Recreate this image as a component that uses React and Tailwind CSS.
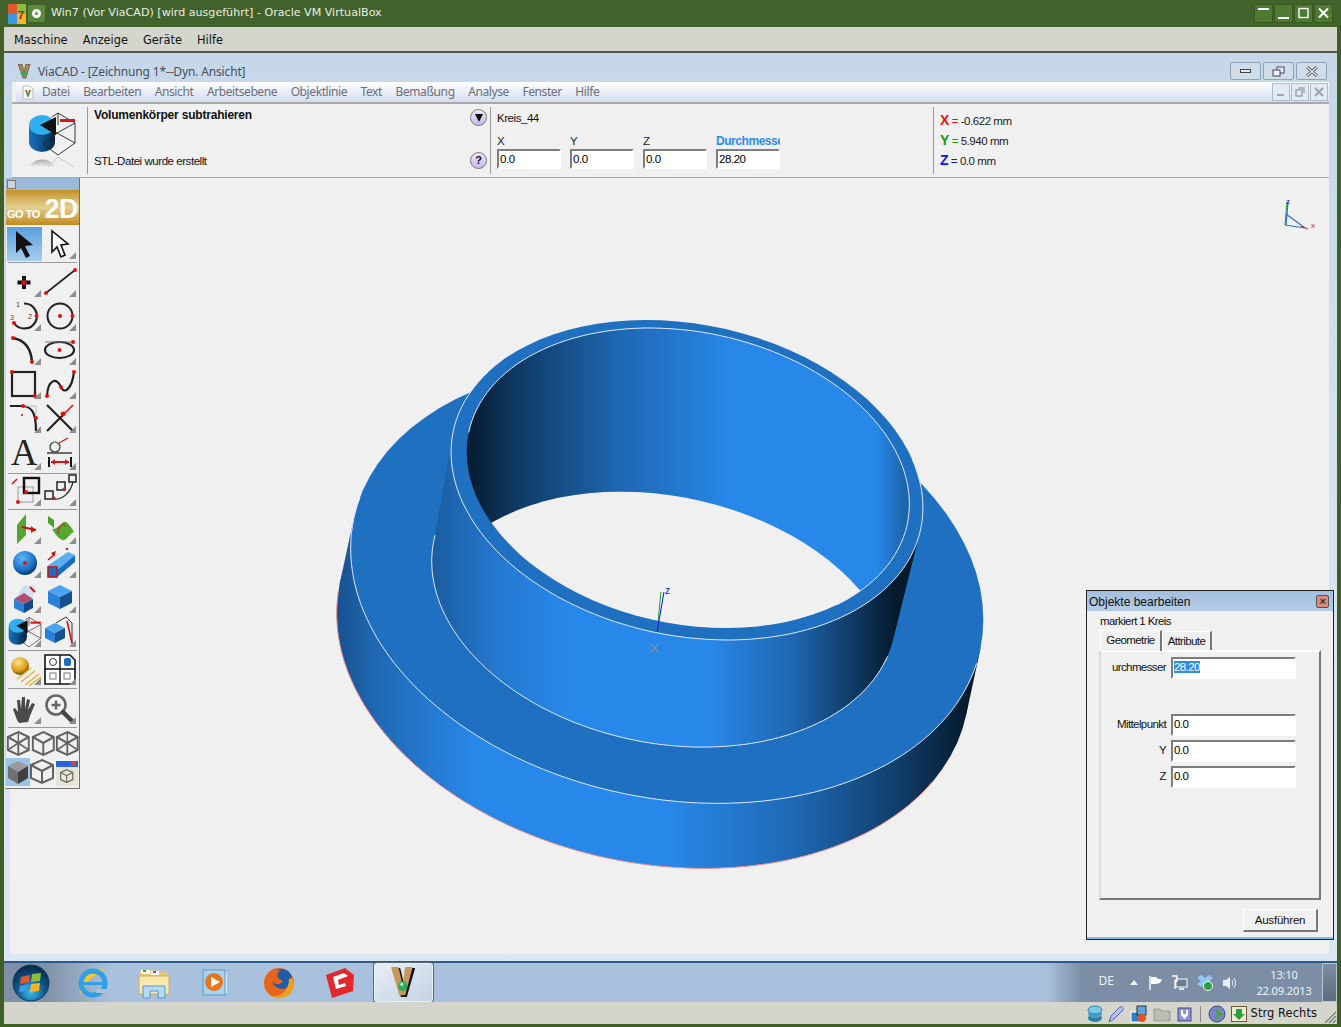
import React from "react";

const DEG = Math.PI / 180;
const TILT = 11.7 * DEG;

// point on a tilted ellipse, t in degrees (0 = right, 90 = bottom)
const pt = (e, t) => {
  const x = e.a * Math.cos(t * DEG);
  const y = e.b * Math.sin(t * DEG);
  return [e.x + x * Math.cos(TILT) - y * Math.sin(TILT), e.y + x * Math.sin(TILT) + y * Math.cos(TILT)];
};

const arc = (e, from, to) => {
  const out = [];
  const steps = 90;
  for (let i = 0; i <= steps; i++) {
    const p = pt(e, from + ((to - from) * i) / steps);
    out.push((i ? "L" : "M") + p[0].toFixed(1) + " " + p[1].toFixed(1));
  }
  return out.join(" ");
};

const full = (e) => arc(e, 0, 360) + " Z";

// quad joining the silhouette points of two ellipses
const sweep = (e, f) => {
  const dx = f.x - e.x;
  const dy = f.y - e.y;
  let lo = 0, hi = 0, loV = 1e9, hiV = -1e9;
  for (let t = 0; t < 360; t++) {
    const p = pt(e, t);
    const c = p[0] * dy - p[1] * dx;
    if (c < loV) { loV = c; lo = t; }
    if (c > hiV) { hiV = c; hi = t; }
  }
  const a = pt(e, lo), b = pt(e, hi), c = pt(f, hi), d = pt(f, lo);
  return `M${a[0]} ${a[1]} L${b[0]} ${b[1]} L${c[0]} ${c[1]} L${d[0]} ${d[1]} Z`;
};

const flangeTop = { x: 667, y: 584, a: 320, b: 214 };
const flangeBottom = { x: 653, y: 649, a: 320, b: 214 };
const tubeTop = { x: 687, y: 480, a: 238.8, b: 155.7 };
const tubeBottom = { x: 664, y: 588, a: 235, b: 155 };
const hole = { x: 688, y: 478, a: 224, b: 146 };
const holeLow = { x: 662, y: 648, a: 236, b: 152 };

function Part() {
  return (
    <svg className="block" width="1319" height="775" viewBox="10 178 1319 775">
      <defs>
        <linearGradient id="wallA" gradientUnits="userSpaceOnUse" x1="338" y1="0" x2="972" y2="0">
          <stop offset="0" stopColor="#175290" />
          <stop offset="0.06" stopColor="#2068b4" />
          <stop offset="0.22" stopColor="#2888ea" />
          <stop offset="0.52" stopColor="#2888ea" />
          <stop offset="0.72" stopColor="#1f68b4" />
          <stop offset="0.88" stopColor="#113f6c" />
          <stop offset="1" stopColor="#05182a" />
        </linearGradient>
        <linearGradient id="wallB" gradientUnits="userSpaceOnUse" x1="432" y1="0" x2="895" y2="0">
          <stop offset="0" stopColor="#1b5c9e" />
          <stop offset="0.14" stopColor="#2478d0" />
          <stop offset="0.3" stopColor="#2888ea" />
          <stop offset="0.6" stopColor="#2888ea" />
          <stop offset="0.78" stopColor="#1e66b0" />
          <stop offset="0.91" stopColor="#0f3a64" />
          <stop offset="1" stopColor="#051a2c" />
        </linearGradient>
        <linearGradient id="bore" gradientUnits="userSpaceOnUse" x1="464" y1="0" x2="912" y2="0">
          <stop offset="0" stopColor="#05192b" />
          <stop offset="0.12" stopColor="#0f3a65" />
          <stop offset="0.34" stopColor="#1e66b0" />
          <stop offset="0.6" stopColor="#2888ea" />
          <stop offset="0.92" stopColor="#2888ea" />
          <stop offset="1" stopColor="#1a5c9c" />
        </linearGradient>
        <clipPath id="boreClip">
          <path d={full(hole)} />
        </clipPath>
      </defs>

      {/* flange */}
      <path d={sweep(flangeTop, flangeBottom)} fill="url(#wallA)" />
      <path d={full(flangeBottom)} fill="url(#wallA)" />
      <path d={arc(flangeBottom, 178, 20)} fill="none" stroke="#f08a8a" strokeWidth="1" />
      <path d={full(flangeTop)} fill="#2070c2" />
      <path d={arc(flangeTop, 186, 4)} fill="none" stroke="#dfeaf6" strokeWidth="1" />

      {/* tube */}
      <path d={sweep(tubeTop, tubeBottom)} fill="url(#wallB)" />
      <path d={full(tubeBottom)} fill="url(#wallB)" />
      <path d={arc(tubeBottom, 182, 8)} fill="none" stroke="#dfeaf6" strokeWidth="1" />
      <path d={full(tubeTop)} fill="#2070c2" />
      <path d={arc(tubeTop, 205, -25)} fill="none" stroke="#dfeaf6" strokeWidth="1" />

      {/* bore */}
      <path d={full(hole)} fill="url(#bore)" />
      <path d={full(holeLow)} fill="#f0f0f0" clipPath="url(#boreClip)" />
      <path d={arc(hole, 180, 400)} fill="none" stroke="#dfeaf6" strokeWidth="1" />

      {/* origin triad */}
      <path d="M657 632 L661 592" stroke="#22a030" strokeWidth="1" />
      <path d="M657 632 L664 592" stroke="#1010f0" strokeWidth="1" />
      <text x="665" y="594" fontSize="10" fill="#1010f0" fontFamily="Liberation Sans, sans-serif">z</text>
      <path d="M651 644 L658 652 M658 644 L651 652" stroke="#d9924a" strokeWidth="0.8" />
    </svg>
  );
}

const Corner = () => <span className="absolute right-[1px] bottom-[2px] w-0 h-0 border-l-[7px] border-l-transparent border-b-[7px] border-b-[#8e8e8e]" />;

function Cell({ children, tri = true, active, w = 35, h = 34 }) {
  return (
    <div className={"relative shrink-0 " + (active ? "bg-gradient-to-b from-[#5a9fe0] to-[#a5cdea]" : "")} style={{ width: w, height: h }}>
      <svg width={w} height={h} viewBox={`0 0 ${w} ${h}`} className="block overflow-visible">{children}</svg>
      {tri && <Corner />}
    </div>
  );
}

const Dot = ({ x, y, r = 2 }) => <circle cx={x} cy={y} r={r} fill="#e01010" />;

function Row({ h = 34, children }) {
  return <div className="flex pl-px" style={{ height: h }}>{children}</div>;
}

const Sep = () => <div className="h-px bg-[#9a9a9a] mx-[2px] my-[1px]" />;

function Cube({ x = 18, y = 15, s = 11, top = "#4aa4f0", left = "#2a7fd6", right = "#15508f" }) {
  return (
    <g>
      <path d={`M${x} ${y - s} L${x + s} ${y - s / 2} L${x} ${y} L${x - s} ${y - s / 2} Z`} fill={top} />
      <path d={`M${x - s} ${y - s / 2} L${x} ${y} L${x} ${y + s} L${x - s} ${y + s / 2} Z`} fill={left} />
      <path d={`M${x + s} ${y - s / 2} L${x} ${y} L${x} ${y + s} L${x + s} ${y + s / 2} Z`} fill={right} />
    </g>
  );
}

function Wire({ cross }) {
  return (
    <g fill="none" stroke="#636363" strokeWidth="2">
      <path d="M14 3 L25 8 L25 21 L14 26 L3 21 L3 8 Z" />
      <path d="M3 8 L14 14 L25 8 M14 14 L14 26" />
      {cross && <path d="M14 3 L14 14 M3 21 L14 14 L25 21" strokeWidth="1.5" />}
    </g>
  );
}

// cylinder with a wedge cut out, next to a wire cube
function SubtractIcon({ scale = 1, id = "cyl" }) {
  return (
    <g transform={`scale(${scale})`}>
      <defs>
        <linearGradient id={id} x1="0" y1="0" x2="1" y2="0">
          <stop offset="0" stopColor="#1a70b8" />
          <stop offset="0.45" stopColor="#0f5590" />
          <stop offset="1" stopColor="#06223e" />
        </linearGradient>
      </defs>
      <ellipse cx="14" cy="31" rx="13" ry="10" fill={`url(#${id})`} />
      <rect x="1" y="14" width="26" height="17" fill={`url(#${id})`} />
      <ellipse cx="14" cy="14" rx="13" ry="10" fill="#2fb0ee" />
      <path d="M12 14 L28 6 L28 24 Z" fill="#111" />
      <g fill="none" stroke="#222" strokeWidth="0.9">
        <path d="M30 2 L47 12 L47 32 L30 44 L15 33" />
        <path d="M24 6 L30 2 M29 22 L47 12 M29 22 L47 32 M29 22 L15 33 M29 22 L22 27 M29 22 L22 17 M30 2 L30 14" />
      </g>
      <rect x="32" y="8" width="15" height="3" fill="#d81818" />
    </g>
  );
}

function Palette() {
  return (
    <div className="absolute left-[5px] top-[178px] w-[75px] h-[611px] bg-[#f0f0f0] border-r border-b border-[#6f6f6f] border-l border-l-[#cfcfcf]">
      <div className="h-[12px] bg-[#9ab8d8] flex items-center pl-[1px]">
        <span className="block shrink-0 w-[9px] h-[9px] bg-[#d2d2d2] border border-[#777]" />
      </div>
      <div className="h-[35px] bg-gradient-to-b from-[#c4921f] via-[#e5cf8e] to-[#c08a14] flex items-end justify-between pr-[1px] overflow-hidden whitespace-nowrap [font-family:'Liberation_Sans',sans-serif]">
        <span className="shrink-0 text-white font-bold text-[11px] leading-[11px] tracking-[-0.5px] ml-[1px] mb-[5px]">GO TO</span>
        <span className="shrink-0 text-white font-bold text-[27px] leading-[26px] tracking-[-0.5px] mb-[3px]">2D</span>
      </div>
      <div className="h-[2px]" />

      <Row>
        <Cell tri={false} active>
          <path d="M9 4 L9 26 L14 21 L19 31 L23 29 L18 19 L26 18 Z" fill="#111" />
        </Cell>
        <Cell>
          <path d="M10 4 L10 25 L15 20 L19 30 L23 28 L19 18 L26 17 Z" fill="#fff" stroke="#111" strokeWidth="1.6" />
        </Cell>
      </Row>
      <Sep />
      <div className="h-[1px]" />

      <Row>
        <Cell>
          <path d="M17 11 L17 24 M10.5 17.5 L23.5 17.5" stroke="#111" strokeWidth="4" />
          <Dot x={17} y={17.5} r={2.5} />
        </Cell>
        <Cell>
          <path d="M4 28 L33 5" stroke="#222" strokeWidth="1.6" />
          <Dot x={4} y={28} /><Dot x={33} y={5} />
        </Cell>
      </Row>
      <Row>
        <Cell>
          <path d="M17 4.5 A12.5 12.5 0 1 1 7 24" fill="none" stroke="#222" strokeWidth="2.2" />
          <Dot x={29.5} y={17} /><Dot x={7} y={24} />
          <text x="9" y="8" fontSize="7" fill="#444" fontFamily="Liberation Sans, sans-serif">1</text>
          <text x="21" y="20" fontSize="7" fill="#444" fontFamily="Liberation Sans, sans-serif">2</text>
          <text x="3" y="21" fontSize="7" fill="#444" fontFamily="Liberation Sans, sans-serif">3</text>
        </Cell>
        <Cell>
          <circle cx="18" cy="17" r="12.5" fill="none" stroke="#222" strokeWidth="2" />
          <Dot x={18} y={17} /><Dot x={30.5} y={17} />
        </Cell>
      </Row>
      <Row>
        <Cell>
          <path d="M6 5 C17 7 24 15 25 29" fill="none" stroke="#222" strokeWidth="2.4" />
          <Dot x={6} y={5} /><Dot x={25} y={29} />
        </Cell>
        <Cell>
          <ellipse cx="17.5" cy="17" rx="14.5" ry="8" fill="none" stroke="#222" strokeWidth="2.2" />
          <path d="M3 9 L31 9" fill="none" stroke="#777" strokeWidth="1" />
          <Dot x={17.5} y={17} /><Dot x={31} y={9} />
        </Cell>
      </Row>
      <Row>
        <Cell>
          <rect x="5" y="5" width="23" height="24" fill="none" stroke="#222" strokeWidth="2.2" />
          <Dot x={5} y={5} /><Dot x={28} y={29} />
        </Cell>
        <Cell>
          <path d="M5 29 C6 12 15 10 19 20 C22 28 30 22 32 5" fill="none" stroke="#222" strokeWidth="2.2" />
          <Dot x={5} y={29} /><Dot x={19} y={20} /><Dot x={32} y={5} />
        </Cell>
      </Row>
      <Row>
        <Cell>
          <path d="M3 5 L16 5 C24 6 29 10 29 30" fill="none" stroke="#222" strokeWidth="2.2" />
          <path d="M16 5 L29 5 L29 17" fill="none" stroke="#bbb" strokeWidth="1" />
          <Dot x={16} y={5} /><Dot x={29} y={17} /><Dot x={15} y={14} r={1} />
        </Cell>
        <Cell>
          <path d="M5 4 L31 30 M5 30 L22 13" stroke="#222" strokeWidth="2.2" />
          <path d="M20 15 L31 4" stroke="#e01010" strokeWidth="1.6" />
          <Dot x={21} y={13} r={2.4} />
        </Cell>
      </Row>
      <Row h={37}>
        <Cell h={37}>
          <text x="17" y="30" textAnchor="middle" fontSize="37" fill="#222" fontFamily="Liberation Serif, serif">A</text>
        </Cell>
        <Cell h={37}>
          <circle cx="13" cy="12" r="5" fill="none" stroke="#333" strokeWidth="1.2" />
          <path d="M17 8 L26 3" stroke="#e01010" strokeWidth="1.2" />
          <path d="M5 18 L30 18" stroke="#333" strokeWidth="1.4" />
          <path d="M7 22 L7 32 M29 22 L29 32" stroke="#111" strokeWidth="2" />
          <path d="M9 27 L27 27" stroke="#e01010" strokeWidth="2" />
          <path d="M9 27 L13 24 L13 30 Z M27 27 L23 24 L23 30 Z" fill="#e01010" />
        </Cell>
      </Row>
      <div className="h-px bg-[#9a9a9a] mx-[2px] mt-[1px]" />
      <Row>
        <Cell>
          <rect x="11" y="13" width="15" height="15" fill="none" stroke="#999" strokeWidth="1" />
          <rect x="17" y="4" width="15" height="15" fill="none" stroke="#111" strokeWidth="2.4" />
          <path d="M5 10 L10 5" stroke="#e01010" strokeWidth="1.6" />
          <Dot x={11} y={28} /><Dot x={19} y={18} />
        </Cell>
        <Cell>
          <rect x="3" y="17" width="8" height="8" fill="none" stroke="#222" strokeWidth="1.5" />
          <rect x="15" y="8" width="8" height="8" fill="none" stroke="#222" strokeWidth="1.5" />
          <rect x="27" y="1" width="7" height="7" fill="none" stroke="#222" strokeWidth="1.5" />
          <path d="M11 25 C20 26 28 20 31 8" fill="none" stroke="#222" strokeWidth="1.2" />
          <Dot x={12} y={24} r={1.5} /><Dot x={22} y={15} r={1.5} />
        </Cell>
      </Row>
      <div className="h-px bg-[#9a9a9a] mx-[2px] mt-[1px] mb-[2px]" />

      <Row>
        <Cell>
          <path d="M10 13 L19 2 L19 23 L10 32 Z" fill="#53a630" />
          <path d="M15 15 L29 18" stroke="#d01010" strokeWidth="2" />
          <path d="M29 18 L24 14 L24 21 Z" fill="#d01010" />
        </Cell>
        <Cell>
          <path d="M6 4 L12 8 L12 16 L6 11 Z" fill="#4f9f2c" />
          <path d="M10 17 C16 18 20 8 24 10 C27 12 30 16 32 20 C27 22 24 30 20 28 C16 26 13 22 10 17 Z" fill="#55a832" />
          <path d="M16 22 C16 14 22 10 24 15" fill="none" stroke="#c81818" strokeWidth="1" />
        </Cell>
      </Row>
      <Row>
        <Cell>
          <defs>
            <radialGradient id="ball" cx="40%" cy="30%" r="70%">
              <stop offset="0" stopColor="#5fb8f5" />
              <stop offset="0.7" stopColor="#1a70c4" />
              <stop offset="1" stopColor="#073a70" />
            </radialGradient>
            <radialGradient id="gold" cx="40%" cy="30%" r="70%">
              <stop offset="0" stopColor="#fde48a" />
              <stop offset="0.7" stopColor="#d89a16" />
              <stop offset="1" stopColor="#6a4c08" />
            </radialGradient>
          </defs>
          <circle cx="18" cy="17" r="12" fill="url(#ball)" />
          <Dot x={18} y={17} />
        </Cell>
        <Cell>
          <path d="M5 20 L26 6 L33 9 L14 25 Z" fill="#5ab0ee" />
          <path d="M14 25 L33 9 L33 16 L14 32 Z" fill="#1a6ec0" />
          <rect x="6" y="21" width="9" height="10" fill="#1a6ec0" stroke="#c01818" strokeWidth="1.6" />
          <path d="M6 14 L13 8" stroke="#d01010" strokeWidth="1.6" />
          <path d="M14 5 L9 7 L12 11 Z" fill="#d01010" />
          <Dot x={25} y={3} r={1.2} />
        </Cell>
      </Row>
      <Row h={35}>
        <Cell h={35}>
          <path d="M7 20 L17 5 L28 6 L25 20 L17 30 Z" fill="#cfe0ee" />
          <path d="M7 19 L17 13 L26 19 L17 24 Z" fill="#b05070" />
          <path d="M7 19 L17 24 L17 33 L7 28 Z" fill="#2a7fd6" />
          <path d="M26 19 L17 24 L17 33 L26 28 Z" fill="#124a85" />
          <path d="M23 7 L28 12" stroke="#c01818" strokeWidth="1.8" />
        </Cell>
        <Cell h={35}>
          <Cube x={18} y={17} s={12} />
        </Cell>
      </Row>
      <Row>
        <Cell>
          <g transform="translate(1 1)"><SubtractIcon scale={0.7} id="cylSmall" /></g>
        </Cell>
        <Cell>
          <Cube x={13} y={18} s={10} />
          <path d="M14 8 L24 2 L30 8 L30 30" fill="none" stroke="#333" strokeWidth="1" />
          <path d="M25 6 L30 28" stroke="#d01010" strokeWidth="1.6" />
        </Cell>
      </Row>
      <div className="h-px bg-[#9a9a9a] mx-[2px] my-[1px]" />
      <div className="h-[1px]" />

      <Row>
        <Cell>
          <circle cx="13" cy="13" r="9" fill="url(#gold)" />
          <path d="M10 26 L24 15 M14 29 L28 18 M18 32 L32 21 M22 33 L34 24" stroke="#e0b030" strokeWidth="1.3" />
        </Cell>
        <Cell>
          <path d="M3 2 L28 2 L33 7 L33 31 L3 31 Z" fill="#fff" stroke="#111" strokeWidth="1.6" />
          <path d="M3 16 L33 16 M18 2 L18 31" stroke="#111" strokeWidth="1.4" />
          <circle cx="11" cy="9" r="3.5" fill="none" stroke="#333" />
          <rect x="22" y="5" width="7" height="8" rx="2" fill="#1a6ec0" />
          <rect x="8" y="20" width="6" height="6" fill="none" stroke="#777" />
          <rect x="22" y="20" width="6" height="6" fill="none" stroke="#777" />
        </Cell>
      </Row>
      <div className="h-px bg-[#9a9a9a] mx-[2px] my-[1px]" />
      <div className="h-[2px]" />

      <Row>
        <Cell>
          <path d="M10 28 L6 17 L8 16 L11 20 L10 8 L13 8 L14 17 L15 5 L18 5 L18 17 L20 7 L23 8 L21 18 L25 11 L28 12 L23 24 L21 30 L12 31 Z" fill="#4a4a4a" />
        </Cell>
        <Cell>
          <circle cx="14" cy="13" r="9.5" fill="#f4f4f4" stroke="#666" strokeWidth="2.6" />
          <path d="M14 8.5 L14 17.5 M9.5 13 L18.5 13" stroke="#666" strokeWidth="2.4" />
          <path d="M21 20 L30 29" stroke="#444" strokeWidth="4.5" strokeLinecap="round" />
        </Cell>
      </Row>
      <div className="h-px bg-[#9a9a9a] mx-[2px] my-[1px]" />
      <div className="h-[1px]" />

      <div className="flex pl-[1px] h-[28px]">
        <Cell tri={false} w={25} h={28}><g transform="translate(-2 -1) scale(0.95 1)"><Wire cross /></g></Cell>
        <Cell tri={false} w={24} h={28}><g transform="translate(-2 -1) scale(0.95 1)"><Wire /></g></Cell>
        <Cell tri={false} w={22} h={28}><g transform="translate(-2 -1) scale(0.95 1)"><Wire cross /></g></Cell>
      </div>
      <div className="flex h-[28px]">
        <div className="w-[24px] h-[28px] bg-[#9cc4e6]">
          <svg width="24" height="28" viewBox="0 0 24 28" className="block">
            <path d="M12 3 L22 8 L12 14 L2 8 Z" fill="#9a9a9a" />
            <path d="M2 8 L12 14 L12 26 L2 20 Z" fill="#707070" />
            <path d="M22 8 L12 14 L12 26 L22 20 Z" fill="#3f3f3f" />
          </svg>
        </div>
        <Cell tri={false} w={25} h={28}><g transform="translate(-2 -1)"><Wire /></g></Cell>
        <Cell tri={false} w={24} h={28}>
          <rect x="1" y="3" width="22" height="25" fill="#e8e6d2" />
          <rect x="1" y="3" width="22" height="6" fill="#2a62e0" />
          <rect x="16" y="4" width="5" height="4" fill="#e04030" />
          <g transform="translate(4 10) scale(0.55)"><Wire /></g>
        </Cell>
      </div>
    </div>
  );
}

const inputCls = "h-[20px] bg-white border-2 border-t-[#7d7d7d] border-l-[#7d7d7d] border-r-white border-b-white text-black leading-[16px] pl-[1px]";

function Field({ label, value, blue }) {
  return (
    <div className="w-[73px] shrink-0">
      <div className={"h-[15px] leading-[15px] overflow-hidden w-[64px] whitespace-nowrap " + (blue ? "text-[#2a8cf0] font-bold text-[12px]" : "text-[#222]")}>{label}</div>
      <div className={inputCls + " w-[64px]"}>{value}</div>
    </div>
  );
}

function Coord({ name, color, value }) {
  return (
    <div className="h-[20px] leading-[20px] whitespace-nowrap">
      <span className={"text-[14px] font-bold " + color}>{name}</span>
      <span className="text-[#222]"> <span className={color}>=</span> {value}</span>
    </div>
  );
}

function RoundBtn({ children }) {
  return (
    <div className="w-[17px] h-[17px] rounded-full border border-[#777] bg-gradient-to-b from-[#efe6fb] to-[#cbb8ee] flex items-center justify-center text-[11px] font-bold text-[#111] leading-none">
      {children}
    </div>
  );
}

function OptionBar() {
  return (
    <div className="h-[76px] bg-[#f0f0f0] border-t-2 border-b border-t-[#a9a9a9] border-b-[#a9a9a9] flex text-[11.5px] tracking-[-0.45px] [font-family:'Liberation_Sans',sans-serif] text-[#111]">
      <div className="w-[75px] shrink-0 pt-[7px] pl-[16px]">
        <svg width="52" height="62" viewBox="0 0 52 62" className="block">
          <SubtractIcon />
          <defs>
            <linearGradient id="shadowFade" x1="0" y1="0" x2="0" y2="1">
              <stop offset="0" stopColor="#a8abae" />
              <stop offset="1" stopColor="#f0f0f0" />
            </linearGradient>
          </defs>
          <path d="M1 56 C6 46 22 46 27 56 Z" fill="url(#shadowFade)" />
          <path d="M30 46 L46 56 M30 46 L20 56" stroke="#c8c8c8" />
        </svg>
      </div>
      <div className="w-px bg-[#9a9a9a] my-[3px]" />
      <div className="w-[375px] shrink-0 pl-[6px] flex flex-col justify-between pt-[2px] pb-[7px]">
        <div className="font-bold text-[12px] tracking-[-0.2px]">Volumenkörper subtrahieren</div>
        <div>STL-Datei wurde erstellt</div>
      </div>
      <div className="w-[27px] shrink-0 flex flex-col justify-between pt-[5px] pb-[8px] pl-[7px]">
        <RoundBtn>
          <span className="block w-0 h-0 mt-[1px] border-l-[4px] border-r-[4px] border-t-[8px] border-l-transparent border-r-transparent border-t-[#111]" />
        </RoundBtn>
        <RoundBtn>?</RoundBtn>
      </div>
      <div className="w-px bg-[#9a9a9a] my-[3px]" />
      <div className="w-[442px] shrink-0 pl-[6px] pt-[7px]">
        <div className="h-[23px] leading-[15px]">Kreis_44</div>
        <div className="flex">
          <Field label="X" value="0.0" />
          <Field label="Y" value="0.0" />
          <Field label="Z" value="0.0" />
          <Field label="Durchmesser" value="28.20" blue />
        </div>
      </div>
      <div className="w-px bg-[#9a9a9a] my-[3px]" />
      <div className="pl-[6px] pt-[6px]">
        <Coord name="X" color="text-[#ee1010]" value="-0.622 mm" />
        <Coord name="Y" color="text-[#0c9c0c]" value="5.940 mm" />
        <Coord name="Z" color="text-[#1010ee]" value="0.0 mm" />
      </div>
    </div>
  );
}

function Triad() {
  return (
    <svg className="absolute left-[1275px] top-[192px]" width="46" height="40" viewBox="0 0 46 40">
      <path d="M10 33 L12 10" stroke="#1c9c30" />
      <path d="M11 33 L13 10" stroke="#2a70c8" strokeWidth="1.2" />
      <path d="M10 33 L30 36 L11 22" fill="none" stroke="#2a70c8" strokeWidth="1.2" />
      <path d="M26 34 L33 37" stroke="#e01818" />
      <text x="36" y="36" fontSize="8" fill="#e01818" fontFamily="Liberation Sans, sans-serif">x</text>
      <text x="11" y="12" fontSize="8" fill="#1010ee" fontFamily="Liberation Sans, sans-serif">z</text>
    </svg>
  );
}

function EditDialog() {
  return (
    <div className="absolute left-[1086px] top-[590px] w-[248px] h-[350px] border border-[#222] bg-[#f0f0f0] text-[11.5px] tracking-[-0.6px] text-[#111] [font-family:'Liberation_Sans',sans-serif] flex flex-col">
      <div className="h-[20px] bg-gradient-to-b from-[#a3bfdc] to-[#b3cbe6] flex items-center justify-between pl-[2px] pr-[4px] shrink-0">
        <span className="text-[12px] tracking-[0px] pt-[1px]">Objekte bearbeiten</span>
        <span className="w-[13px] h-[13px] rounded-[2px] border border-[#555] bg-[#d98a7c] text-[#333] flex items-center justify-center text-[11px] font-bold leading-none">×</span>
      </div>
      <div className="pl-[13px] h-[19px] leading-[20px] shrink-0">markiert 1 Kreis</div>
      <div className="flex pl-[13px] h-[20px] items-end shrink-0">
        <div className="w-[62px] h-[21px] border-t border-l border-r-2 border-t-white border-l-white border-r-[#777] bg-[#f0f0f0] text-center leading-[18px] relative top-[1px]">Geometrie</div>
        <div className="w-[50px] h-[19px] border-t border-l border-r-2 border-t-white border-l-white border-r-[#777] text-center leading-[19px]">Attribute</div>
      </div>
      <div className="ml-[12px] mr-[12px] h-[250px] border-2 border-t-white border-l-[#dcdcdc] border-r-[#777] border-b-[#777] shrink-0 pt-[3px]">
        <div className="flex items-center h-[26px]">
          <span className="w-[70px] text-right pr-[5px]">urchmesser</span>
          <div className={inputCls + " w-[125px] h-[22px] leading-[17px]"}>
            <span className="bg-[#2f8de8] text-white">28.20</span>
          </div>
        </div>
        <div className="h-[33px]" />
        <div className="flex flex-col gap-[4px]">
          {[["Mittelpunkt", "0.0"], ["Y", "0.0"], ["Z", "0.0"]].map(([l, v]) => (
            <div key={l} className="flex items-center h-[22px]">
              <span className="w-[70px] text-right pr-[5px]">{l}</span>
              <div className={inputCls + " w-[125px] h-[22px] leading-[17px]"}>{v}</div>
            </div>
          ))}
        </div>
      </div>
      <div className="flex justify-end pr-[15px] pt-[9px]">
        <div className="w-[75px] h-[23px] border border-t-white border-l-white border-r-2 border-b-2 border-r-[#777] border-b-[#777] text-center leading-[20px] tracking-[-0.2px]">Ausführen</div>
      </div>
      <div className="absolute left-0 right-0 bottom-0 h-[2px] bg-[#7cc0e8]" />
    </div>
  );
}

function TaskIcons() {
  return (
    <div className="flex items-center h-full">
      {/* start orb */}
      <div className="w-[57px] flex justify-center pr-[3px]">
        <svg width="38" height="38" viewBox="0 0 38 38" className="block">
          <defs>
            <radialGradient id="orb" cx="50%" cy="75%" r="70%">
              <stop offset="0" stopColor="#3fc0ee" />
              <stop offset="0.55" stopColor="#10558c" />
              <stop offset="1" stopColor="#0a2c4c" />
            </radialGradient>
          </defs>
          <circle cx="19" cy="19" r="18" fill="url(#orb)" stroke="#0b3a5e" />
          <path d="M9 13 L18 11 L17 18 L8 20 Z" fill="#e2562c" />
          <path d="M20 10 L29 9 L28 17 L19 18 Z" fill="#8dbb3a" />
          <path d="M8 22 L17 20 L16 27 L7 28 Z" fill="#3a9ae0" />
          <path d="M19 20 L28 19 L27 27 L18 28 Z" fill="#f3b52c" />
        </svg>
      </div>
      {/* IE */}
      <div className="w-[62px] flex justify-center">
        <svg width="32" height="32" viewBox="0 0 32 32" className="block">
          <path d="M4 24 C2 12 14 3 30 2 C26 5 10 10 5 28 Z" fill="#f0c828" />
          <circle cx="17" cy="16" r="12" fill="none" stroke="#2fa0e6" strokeWidth="5" />
          <path d="M7 15 L28 15 L28 18 L7 18 Z" fill="#2fa0e6" />
          <path d="M21 22 L30 22 L30 26 L20 26 Z" fill="#a9c1dc" />
        </svg>
      </div>
      {/* explorer */}
      <div className="w-[62px] flex justify-center">
        <svg width="32" height="32" viewBox="0 0 32 32" className="block">
          <path d="M1 5 L12 3 L30 6 L31 26 L2 26 Z" fill="#e8c868" />
          <rect x="3" y="3" width="9" height="4" fill="#fff" />
          <rect x="13" y="4" width="8" height="4" fill="#fff" />
          <rect x="5" y="3" width="3" height="2" fill="#3aa83a" />
          <rect x="15" y="4" width="3" height="2" fill="#d83030" />
          <rect x="1" y="9" width="30" height="18" fill="#f7e9ae" stroke="#cfae5a" />
          <path d="M5 31 L5 19 L27 19 L27 31 L20 31 L20 24 L12 24 L12 31 Z" fill="#b4d9f0" stroke="#4f9ad0" />
        </svg>
      </div>
      {/* media player */}
      <div className="w-[62px] flex justify-center">
        <svg width="32" height="32" viewBox="0 0 32 32" className="block">
          <rect x="8" y="4" width="20" height="23" fill="#cfe2f2" stroke="#8fb6d8" />
          <rect x="3" y="3" width="22" height="25" fill="#a8d2ee" stroke="#5c9ccc" />
          <circle cx="14" cy="15" r="9" fill="#e8761c" />
          <path d="M11 10 L20 15 L11 20 Z" fill="#fff" />
        </svg>
      </div>
      {/* firefox */}
      <div className="w-[62px] flex justify-center pl-[1px]">
        <svg width="32" height="32" viewBox="0 0 32 32" className="block">
          <circle cx="16" cy="16" r="15" fill="#e8641c" />
          <circle cx="19" cy="12" r="10" fill="#1f5ca8" />
          <path d="M31 16 A15 15 0 0 1 8 29 C18 30 26 24 26 12 C28 10 30 12 31 16 Z" fill="#f0a020" />
          <path d="M6 8 C10 4 14 3 18 4 C12 6 14 12 20 14 C18 18 12 18 10 15 C7 13 6 11 6 8 Z" fill="#e8641c" />
        </svg>
      </div>
      {/* sketchup */}
      <div className="w-[62px] flex justify-center">
        <svg width="32" height="32" viewBox="0 0 32 32" className="block">
          <path d="M2 8 L21 1 L30 8 L29 24 L8 31 Z" fill="#e2282c" />
          <path d="M9 10 L20 6 L24 9 L14 13 L15 18 L21 16 L22 19 L12 22 Z" fill="#fff" />
        </svg>
      </div>
      {/* viacad, active */}
      <div className="ml-[3px] w-[59px] h-[39px] rounded-[3px] border border-[#e8f0f8] bg-gradient-to-br from-[#e8eef5] to-[#c3d2e3] shadow-[0_0_0_1px_#56687c] flex justify-center items-center">
        <svg width="25" height="31" viewBox="0 0 30 34" preserveAspectRatio="none" className="block">
          <path d="M1 1 L11 1 L16 20 L19 1 L29 1 L19 33 L12 33 Z" fill="#111" />
          <path d="M0 0 L9 0 L14 20 L17 0 L26 0 L17 31 L10 31 Z" fill="#c89858" />
          <circle cx="14" cy="21" r="5.5" fill="#32a85c" />
          <circle cx="13" cy="19" r="2" fill="#a8e8c0" />
        </svg>
      </div>
    </div>
  );
}

function TrayIcons() {
  return (
    <div className="flex items-center gap-[8px]">
      <svg width="16" height="16" viewBox="0 0 16 16"><path d="M3 1 L3 15" stroke="#fff" strokeWidth="1.4" /><path d="M4 2 L9 2 L11 4 L15 4 L13 8 L9 9 L4 9 Z" fill="#fff" /></svg>
      <svg width="17" height="17" viewBox="0 0 17 17"><rect x="5" y="5" width="11" height="8" fill="#6a7d92" stroke="#fff" /><path d="M1 2 L6 2 L6 7 L4 7 L4 15 M8 15 L13 15" fill="none" stroke="#fff" strokeWidth="1.3" /></svg>
      <svg width="18" height="17" viewBox="0 0 18 17"><path d="M5 1 L9 4 L13 1 L17 4 L13 7 L17 10 L13 13 L9 10 L5 13 L1 10 L5 7 L1 4 Z" fill="#8ecaf2" /><circle cx="12" cy="12" r="4.5" fill="#2aa040" stroke="#fff" /></svg>
      <svg width="16" height="16" viewBox="0 0 16 16"><path d="M1 5 L4 5 L8 2 L8 14 L4 11 L1 11 Z" fill="#e8eef5" /><path d="M10 5 C11 7 11 9 10 11 M12 3 C14 6 14 10 12 13" fill="none" stroke="#e8eef5" /></svg>
    </div>
  );
}

function StatusIcons() {
  return (
    <div className="flex items-center gap-[5px]">
      <svg width="16" height="18" viewBox="0 0 16 18"><ellipse cx="8" cy="13" rx="7" ry="4" fill="#2f7ea8" /><ellipse cx="8" cy="9" rx="7" ry="4" fill="#4aa0c8" /><ellipse cx="8" cy="5" rx="7" ry="4" fill="#7cc8e8" stroke="#2f7ea8" /></svg>
      <svg width="17" height="18" viewBox="0 0 17 18"><path d="M1 17 L3 11 L12 2 C14 1 16 3 15 5 L6 14 Z" fill="#b8c0ec" stroke="#5a64a8" /></svg>
      <svg width="18" height="18" viewBox="0 0 18 18"><rect x="1" y="7" width="10" height="10" fill="#2f7ecc" stroke="#fff" /><rect x="7" y="1" width="9" height="9" fill="#5aa4e0" stroke="#333" /><circle cx="12" cy="13" r="4" fill="#e8541c" /></svg>
      <svg width="18" height="16" viewBox="0 0 18 16"><path d="M1 3 L7 3 L8 5 L17 5 L17 15 L1 15 Z" fill="#bcbcb4" stroke="#9a9a92" /></svg>
      <svg width="17" height="17" viewBox="0 0 17 17"><rect x="2" y="2" width="13" height="13" fill="#8c94d8" stroke="#44487c" /><path d="M5 4 L5 9 L8.5 13 L12 9 L12 4 L10 4 L10 8 L7 8 L7 4 Z" fill="#fff" /></svg>
      <div className="w-px h-[16px] bg-[#8a8a84] mx-[2px]" />
      <svg width="18" height="18" viewBox="0 0 18 18"><circle cx="9" cy="9" r="8" fill="#7a84c8" stroke="#44487c" /><path d="M7 3 L15 9 L7 15 L9 9 Z" fill="#4aa830" /></svg>
      <svg width="16" height="16" viewBox="0 0 16 16"><rect x="0.5" y="0.5" width="15" height="15" fill="#f0ead8" stroke="#6b5a34" /><path d="M5 3 L11 3 L11 8 L14 8 L8 14 L2 8 L5 8 Z" fill="#2aa038" /></svg>
    </div>
  );
}

export default function App() {
  return (
    <div className="relative w-[1341px] h-[1027px] overflow-hidden bg-[#3f5f27] flex flex-col">
      {/* virtualbox title */}
      <div className="h-[27px] flex items-center pl-[8px] pr-[8px] shrink-0 bg-[#41622a] [font-family:'DejaVu_Sans',sans-serif] text-[11.1px] text-[#e8eee2]">
        <svg width="18" height="20" viewBox="0 0 18 20" className="block">
          <rect x="0" y="0" width="9" height="10" fill="#e2562c" />
          <rect x="9" y="0" width="9" height="10" fill="#8dbb3a" />
          <rect x="0" y="10" width="9" height="10" fill="#3a9ae0" />
          <rect x="9" y="10" width="9" height="10" fill="#f3b52c" />
          <text x="10" y="15" fontSize="11" fontWeight="bold" fill="#a01818" fontFamily="Liberation Sans, sans-serif">7</text>
        </svg>
        <div className="ml-[2px] w-[17px] h-[17px] bg-[#5b8a3e] rounded-[2px] flex items-center justify-center">
          <span className="block w-[9px] h-[9px] rounded-full border-[3px] border-white" />
        </div>
        <span className="ml-[6px] flex-1 whitespace-nowrap">Win7 (Vor ViaCAD) [wird ausgeführt] - Oracle VM VirtualBox</span>
        <div className="flex gap-px">
          {["roll", "min", "max", "close"].map((b) => (
            <div key={b} className="w-[19px] h-[19px] rounded-[2px] bg-[#4f7a33] border border-[#39581f]">
              <svg width="17" height="17" viewBox="0 0 17 17" className="block">
                {b === "roll" && <rect x="3" y="3" width="11" height="2" fill="#fff" />}
                {b === "min" && <rect x="3" y="12" width="11" height="2" fill="#fff" />}
                {b === "max" && <rect x="4" y="3.5" width="9" height="9" fill="none" stroke="#fff" strokeWidth="1.4" />}
                {b === "close" && <path d="M4 3.5 L13 12.5 M13 3.5 L4 12.5" stroke="#fff" strokeWidth="2" />}
              </svg>
            </div>
          ))}
        </div>
      </div>

      <div className="flex-1 ml-[4px] mr-[4px] mb-[3px] flex flex-col min-h-0">
        {/* virtualbox menu */}
        <div className="h-[26px] shrink-0 bg-[#d4d6ce] border-b-2 border-b-[#55584f] flex items-center gap-[15px] pl-[10px] pt-[3px] text-[11.4px] text-[#111] [font-family:'DejaVu_Sans',sans-serif]">
          <span>Maschine</span>
          <span>Anzeige</span>
          <span>Geräte</span>
          <span>Hilfe</span>
        </div>

        {/* guest screen */}
        <div className="h-[908px] shrink-0 bg-gradient-to-b from-[#c5d7e8] via-[#d5e3f0] to-[#dbe7f3] flex flex-col pl-[6px] pr-[8px]">
          <div className="h-[29px] shrink-0 flex items-center justify-between pl-[8px] pr-[2px]">
            <div className="flex items-center gap-[7px] pt-[8px] text-[12px] tracking-[-0.15px] text-[#45505c] [font-family:'Noto_Sans',sans-serif]">
              <svg width="13" height="15" viewBox="0 0 13 15" className="block">
                <path d="M0 0 L4 0 L6 8 L8 0 L12 0 L8 14 L5 14 Z" fill="#b88a4a" stroke="#222" strokeWidth="0.5" />
                <circle cx="6" cy="9" r="2.5" fill="#32a85c" />
              </svg>
              <span>ViaCAD - [Zeichnung 1*--Dyn. Ansicht]</span>
            </div>
            <div className="flex gap-[2px] pt-[7px]">
              <div className="w-[31px] h-[18px] rounded-[2px] border border-[#8fa3b8] bg-[#cfdcea] flex items-center justify-center"><span className="block w-[11px] h-[4px] bg-[#e6eaee] border border-[#444]" /></div>
              <div className="w-[31px] h-[18px] rounded-[2px] border border-[#8fa3b8] bg-[#cfdcea] flex items-center justify-center">
                <svg width="13" height="11" viewBox="0 0 13 11"><rect x="5" y="1" width="7" height="6" fill="#eef" stroke="#444" /><rect x="1" y="4" width="7" height="6" fill="#eef" stroke="#444" /></svg>
              </div>
              <div className="w-[31px] h-[18px] rounded-[2px] border border-[#8fa3b8] bg-[#cfdcea] flex items-center justify-center">
                <svg width="14" height="11" viewBox="0 0 14 11"><path d="M2 1 L12 10 M12 1 L2 10" stroke="#444" strokeWidth="3" /><path d="M2 1 L12 10 M12 1 L2 10" stroke="#eef" strokeWidth="1.4" /></svg>
              </div>
            </div>
          </div>

          <div className="flex-1 ml-[2px] flex flex-col min-h-0 bg-[#f0f0f0]">
            {/* viacad menu */}
            <div className="h-[20px] shrink-0 ml-[4px] bg-gradient-to-b from-white to-[#d4dcf0] flex items-center text-[12px] text-[#6a6e78] [font-family:'Noto_Sans',sans-serif]">
              <svg width="12" height="15" viewBox="0 0 12 15" className="block ml-[6px] mr-[8px]">
                <path d="M1 1 L8 1 L11 4 L11 14 L1 14 Z" fill="#fafafa" stroke="#bbb" />
                <path d="M3 5 L5 5 L6 9 L7 5 L9 5 L6.5 12 L5.5 12 Z" fill="#8a6a3a" />
                <circle cx="6" cy="9" r="1.3" fill="#32a85c" />
              </svg>
              <div className="flex-1 flex gap-[13.5px] whitespace-nowrap tracking-[-0.4px]">
                {["Datei", "Bearbeiten", "Ansicht", "Arbeitsebene", "Objektlinie", "Text", "Bemaßung", "Analyse", "Fenster", "Hilfe"].map((m) => (
                  <span key={m}>{m}</span>
                ))}
              </div>
              <div className="flex gap-px pr-[1px]">
                {["_", "r", "x"].map((k) => (
                  <div key={k} className="w-[18px] h-[18px] border border-[#b0bccb] bg-[#e3eaf3] flex items-center justify-center">
                    <svg width="10" height="10" viewBox="0 0 10 10">
                      {k === "_" && <rect x="1" y="7" width="7" height="2" fill="#9aa4ae" />}
                      {k === "r" && <path d="M3 1 L9 1 L9 6 M1 3 L7 3 L7 9 L1 9 Z" fill="none" stroke="#9aa4ae" strokeWidth="1.4" />}
                      {k === "x" && <path d="M1 1 L9 9 M9 1 L1 9" stroke="#9aa4ae" strokeWidth="2" />}
                    </svg>
                  </div>
                ))}
              </div>
            </div>
            <OptionBar />
            <div className="h-[775px] shrink-0 -ml-[2px] bg-[#f0f0f0]">
              <Part />
            </div>
          </div>
          <div className="h-[7px] shrink-0" />
        </div>

        {/* taskbar */}
        <div className="h-[2px] shrink-0 bg-[#2c5a8a]" />
        <div className="h-[39px] shrink-0 bg-gradient-to-r from-[#7f90a6] from-[3%] to-[#a9c1dc] to-[8%] relative flex justify-between">
          <div className="absolute inset-y-0 right-0 w-[290px] bg-gradient-to-r from-[#a9c1dc] to-[#7b8ea6] to-[12%]" />
          <TaskIcons />
          <div className="relative flex items-center text-[#eef3f8] [font-family:'Noto_Sans',sans-serif] text-[12px]">
            <span className="mr-[16px] mb-[4px]">DE</span>
            <span className="mr-[9px] block w-0 h-0 border-l-[4px] border-r-[4px] border-b-[5px] border-l-transparent border-r-transparent border-b-[#eef3f8]" />
            <TrayIcons />
            <div className="ml-[15px] w-[62px] text-center text-[11px] leading-[16px] tracking-[-0.1px]">
              <div>13:10</div>
              <div>22.09.2013</div>
            </div>
            <div className="ml-[7px] w-[15px] h-[39px] border border-[#b5c3d2] bg-gradient-to-b from-[#7e8ea0] to-[#5d6d80]" />
          </div>
        </div>

        {/* virtualbox status bar */}
        <div className="flex-1 bg-[#d4d6ce] flex justify-end items-center pr-[20px] pt-[2px] relative [font-family:'DejaVu_Sans',sans-serif] text-[11.4px] text-[#111]">
          <StatusIcons />
          <span className="ml-[4px] tracking-[0.1px]">Strg Rechts</span>
          <svg className="absolute right-[0px] bottom-0" width="13" height="13" viewBox="0 0 13 13">
            <path d="M12 1 L1 12 M12 5 L5 12 M12 9 L9 12" stroke="#777" strokeWidth="1.2" />
          </svg>
        </div>
      </div>

      <Palette />
      <Triad />
      <EditDialog />
    </div>
  );
}
